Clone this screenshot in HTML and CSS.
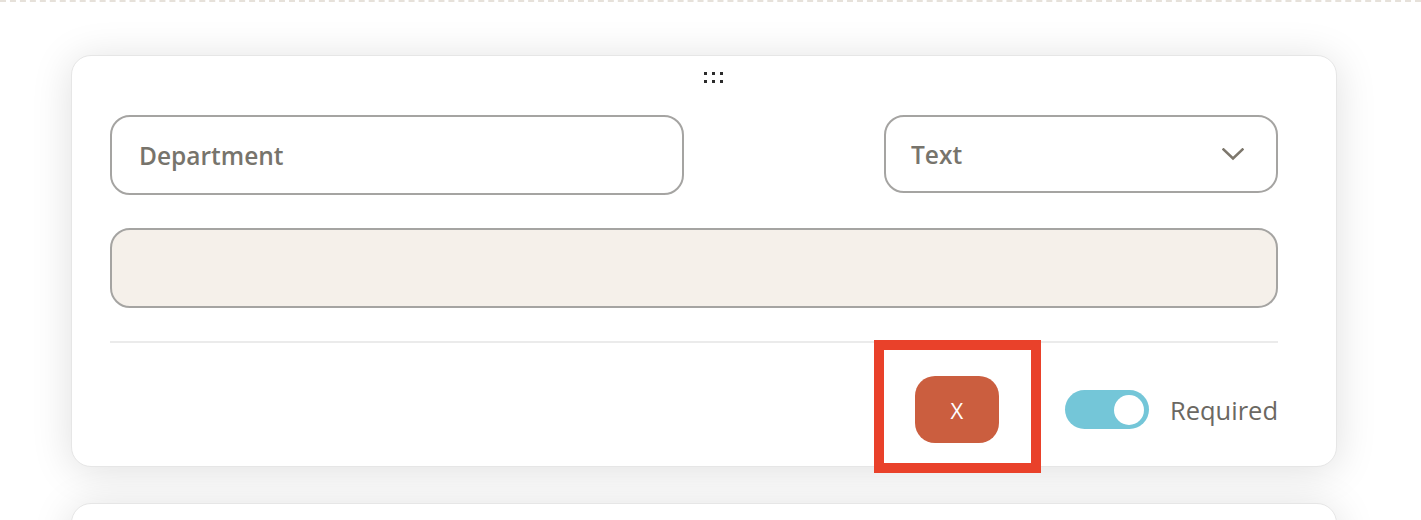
FILE: index.html
```html
<!DOCTYPE html>
<html lang="en">
<head>
<meta charset="utf-8">
<title>Field editor</title>
<link rel="stylesheet" href="styles.css">
</head>
<body>
<div class="page">
  <div class="card">
    <div class="handle-row">
      <div class="handle" aria-label="Drag handle">
        <span></span><span></span><span></span><span></span><span></span><span></span>
      </div>
    </div>
    <div class="top-row">
      <div class="field name-field">Department</div>
      <div class="field select-field">
        <span>Text</span>
        <svg class="chevron" width="22" height="13" viewBox="0 0 22 13" aria-hidden="true">
          <path d="M1.5 1.5 L11 10.5 L20.5 1.5" fill="none" stroke="#7d776c" stroke-width="2.6" stroke-linecap="square"/>
        </svg>
      </div>
    </div>
    <div class="field area-field"></div>
    <div class="divider"></div>
    <div class="bottom-row">
      <div class="btn-wrap">
        <button class="remove-btn" type="button">X</button>
        <div class="highlight"></div>
      </div>
      <div class="toggle"><div class="knob"></div></div>
      <span class="toggle-label">Required</span>
    </div>
  </div>
  <div class="card card-next"></div>
</div>
</body>
</html>
```
FILE: styles.css
```css
html, body {
  margin: 0;
  padding: 0;
  background: #ffffff;
  font-family: "Open Sans", "Noto Sans", "Liberation Sans", sans-serif;
}

.page {
  border-top: 2px dashed #e6e1da;
  padding: 53px 84px 0 71px;
  overflow: hidden;
  height: 465px;
}

.card {
  background: #ffffff;
  border: 1px solid #e6e6e6;
  border-radius: 20px;
  box-shadow: 0 4px 40px rgba(0, 0, 0, 0.13);
  padding: 0 58px 23px 38px;
}

.card-next {
  margin-top: 36px;
  height: 300px;
}

.handle-row {
  display: flex;
  justify-content: center;
  padding-left: 39px;
  padding-top: 16px;
}

.handle {
  display: grid;
  grid-template-columns: repeat(3, 3px);
  grid-auto-rows: 3px;
  column-gap: 5px;
  row-gap: 5px;
}

.handle span {
  display: block;
  width: 3px;
  height: 3px;
  background: #2b2b2b;
}

.top-row {
  margin-top: 32px;
  display: flex;
  justify-content: space-between;
  align-items: flex-start;
}

.field {
  box-sizing: border-box;
  border: 2px solid #a5a4a2;
  border-radius: 20px;
  color: #77746c;
  font-size: 24.5px;
  font-weight: 600;
  display: flex;
  align-items: center;
  padding: 0 27px;
}

.name-field {
  width: 574px;
  height: 80px;
}

.select-field {
  width: 394px;
  height: 78px;
  justify-content: space-between;
  padding-left: 25px;
  padding-right: 32px;
}

.chevron {
  display: block;
}

.area-field {
  margin-top: 33px;
  height: 80px;
  background: #f5f0ea;
}

.divider {
  margin-top: 33px;
  height: 2px;
  background: #ebebeb;
}

.bottom-row {
  margin-top: 33px;
  display: flex;
  justify-content: flex-end;
  align-items: center;
}

.btn-wrap {
  position: relative;
}

.remove-btn {
  display: block;
  width: 84px;
  height: 67px;
  border: none;
  border-radius: 20px;
  background: #cb5e3f;
  color: #ffffff;
  font-family: "Open Sans", "Noto Sans", sans-serif;
  font-size: 22px;
  padding: 0;
}

.highlight {
  position: absolute;
  left: -41px;
  top: -36px;
  width: 147px;
  height: 113px;
  border: 10px solid #e9412a;
  pointer-events: none;
}

.toggle {
  margin-left: 66px;
  width: 84px;
  height: 39px;
  border-radius: 20px;
  background: #74c6d8;
  display: flex;
  justify-content: flex-end;
  align-items: center;
  padding: 0 5px;
  box-sizing: border-box;
}

.knob {
  width: 30px;
  height: 30px;
  border-radius: 50%;
  background: #ffffff;
}

.toggle-label {
  margin-left: 21px;
  font-size: 25.5px;
  color: #6b6862;
}
```
